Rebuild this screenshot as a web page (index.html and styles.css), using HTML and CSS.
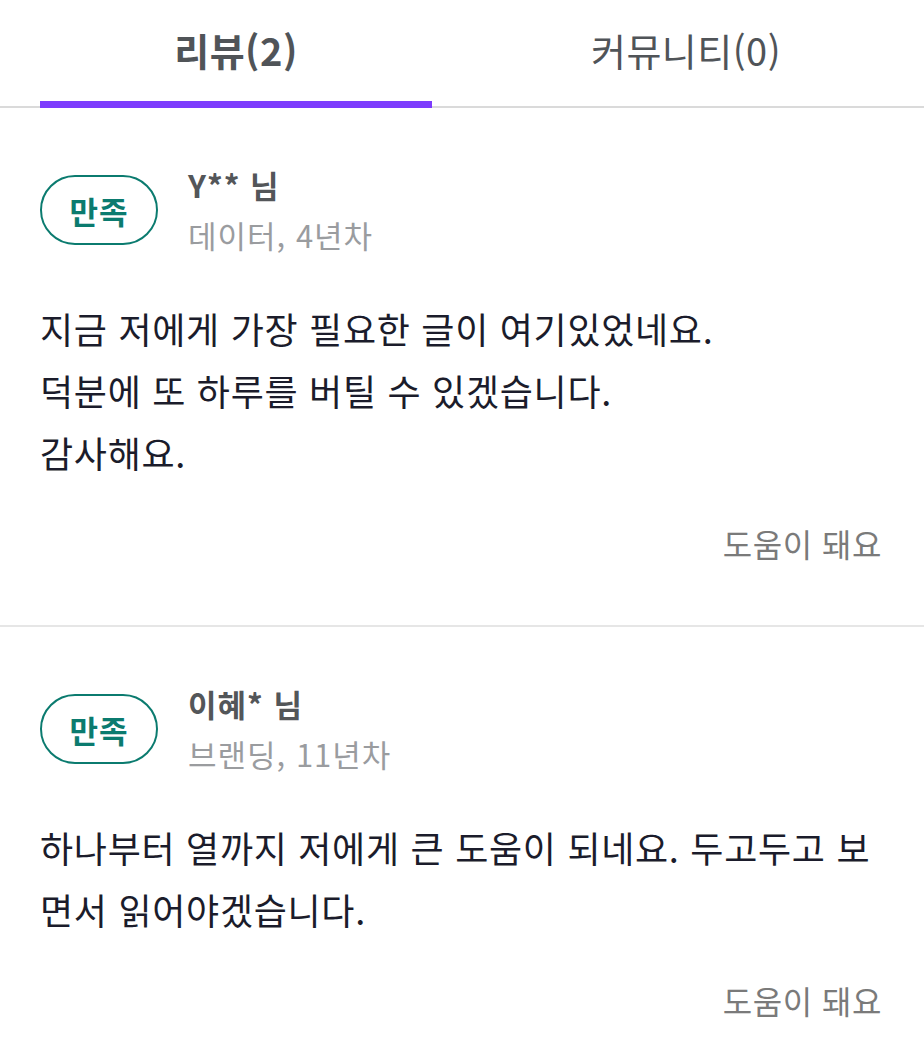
FILE: index.html
```html
<!DOCTYPE html>
<html lang="ko">
<head>
    <meta charset="UTF-8">
    <meta name="viewport" content="width=device-width, initial-scale=1.0">
    <title>리뷰</title>
    <link rel="stylesheet" href="styles.css">
</head>
<body>
    <!-- 탭 -->
    <div class="tabs">
        <div class="tab active">리뷰(2)</div>
        <div class="tab">커뮤니티(0)</div>
    </div>

    <!-- 리뷰 목록 -->
    <div class="review">
        <div class="review-head">
            <span class="badge">만족</span>
            <div class="writer">
                <div class="writer-name">Y** 님</div>
                <div class="writer-meta">데이터, 4년차</div>
            </div>
        </div>
        <p class="review-text">지금 저에게 가장 필요한 글이 여기있었네요.<br>덕분에 또 하루를 버틸 수 있겠습니다.<br>감사해요.</p>
        <div class="review-foot">
            <button class="helpful">도움이 돼요</button>
        </div>
    </div>

    <div class="review">
        <div class="review-head">
            <span class="badge">만족</span>
            <div class="writer">
                <div class="writer-name">이혜* 님</div>
                <div class="writer-meta">브랜딩, 11년차</div>
            </div>
        </div>
        <p class="review-text">하나부터 열까지 저에게 큰 도움이 되네요. 두고두고 보면서 읽어야겠습니다.</p>
        <div class="review-foot">
            <button class="helpful">도움이 돼요</button>
        </div>
    </div>
</body>
</html>
```

FILE: styles.css
```css
* {
    margin: 0;
    padding: 0;
    box-sizing: border-box;
}

body {
    font-family: 'Noto Sans CJK KR', 'Noto Sans', sans-serif;
    background-color: #fff;
    color: #1b1c2b;
    overflow-x: hidden;
}

.tabs {
    display: grid;
    grid-template-columns: 1fr 1fr;
    gap: 58px;
    padding: 0 42px 0 40px;
    border-bottom: 2px solid #dadada;
}

.tab {
    height: 108px;
    padding-top: 24px;
    text-align: center;
    font-size: 38px;
    line-height: 52px;
    letter-spacing: 0.5px;
    color: #505458;
    border-bottom: 7px solid transparent;
    margin-bottom: -2px;
}

.tab.active {
    font-weight: 700;
    border-bottom-color: #7d3cfd;
}

.review {
    padding: 52px 42px 60px 40px;
    border-bottom: 2px solid #e6e6e6;
}

.review:last-child {
    border-bottom: none;
}

.review-head {
    display: flex;
    align-items: center;
    gap: 30px;
}

.badge {
    width: 118px;
    height: 70px;
    border: 2.5px solid #0b7b6f;
    border-radius: 35px;
    display: flex;
    justify-content: center;
    align-items: center;
    font-size: 31px;
    font-weight: 700;
    letter-spacing: 1px;
    color: #0b7b6f;
}

.writer-name {
    font-size: 31px;
    line-height: 50px;
    font-weight: 700;
    letter-spacing: 1px;
    color: #535659;
}

.writer-meta {
    font-size: 31px;
    line-height: 50px;
    letter-spacing: 1px;
    color: #9a9c9f;
}

.review-text {
    margin-top: 37px;
    font-size: 36px;
    line-height: 62px;
    letter-spacing: 0.7px;
    word-break: break-all;
    color: #1b1c2b;
}

.review-foot {
    margin-top: 38px;
    display: flex;
    justify-content: flex-end;
}

.helpful {
    border: none;
    background: none;
    font-family: inherit;
    font-size: 32px;
    line-height: 44px;
    letter-spacing: 0.5px;
    color: #7a7a7a;
    cursor: pointer;
}
```
